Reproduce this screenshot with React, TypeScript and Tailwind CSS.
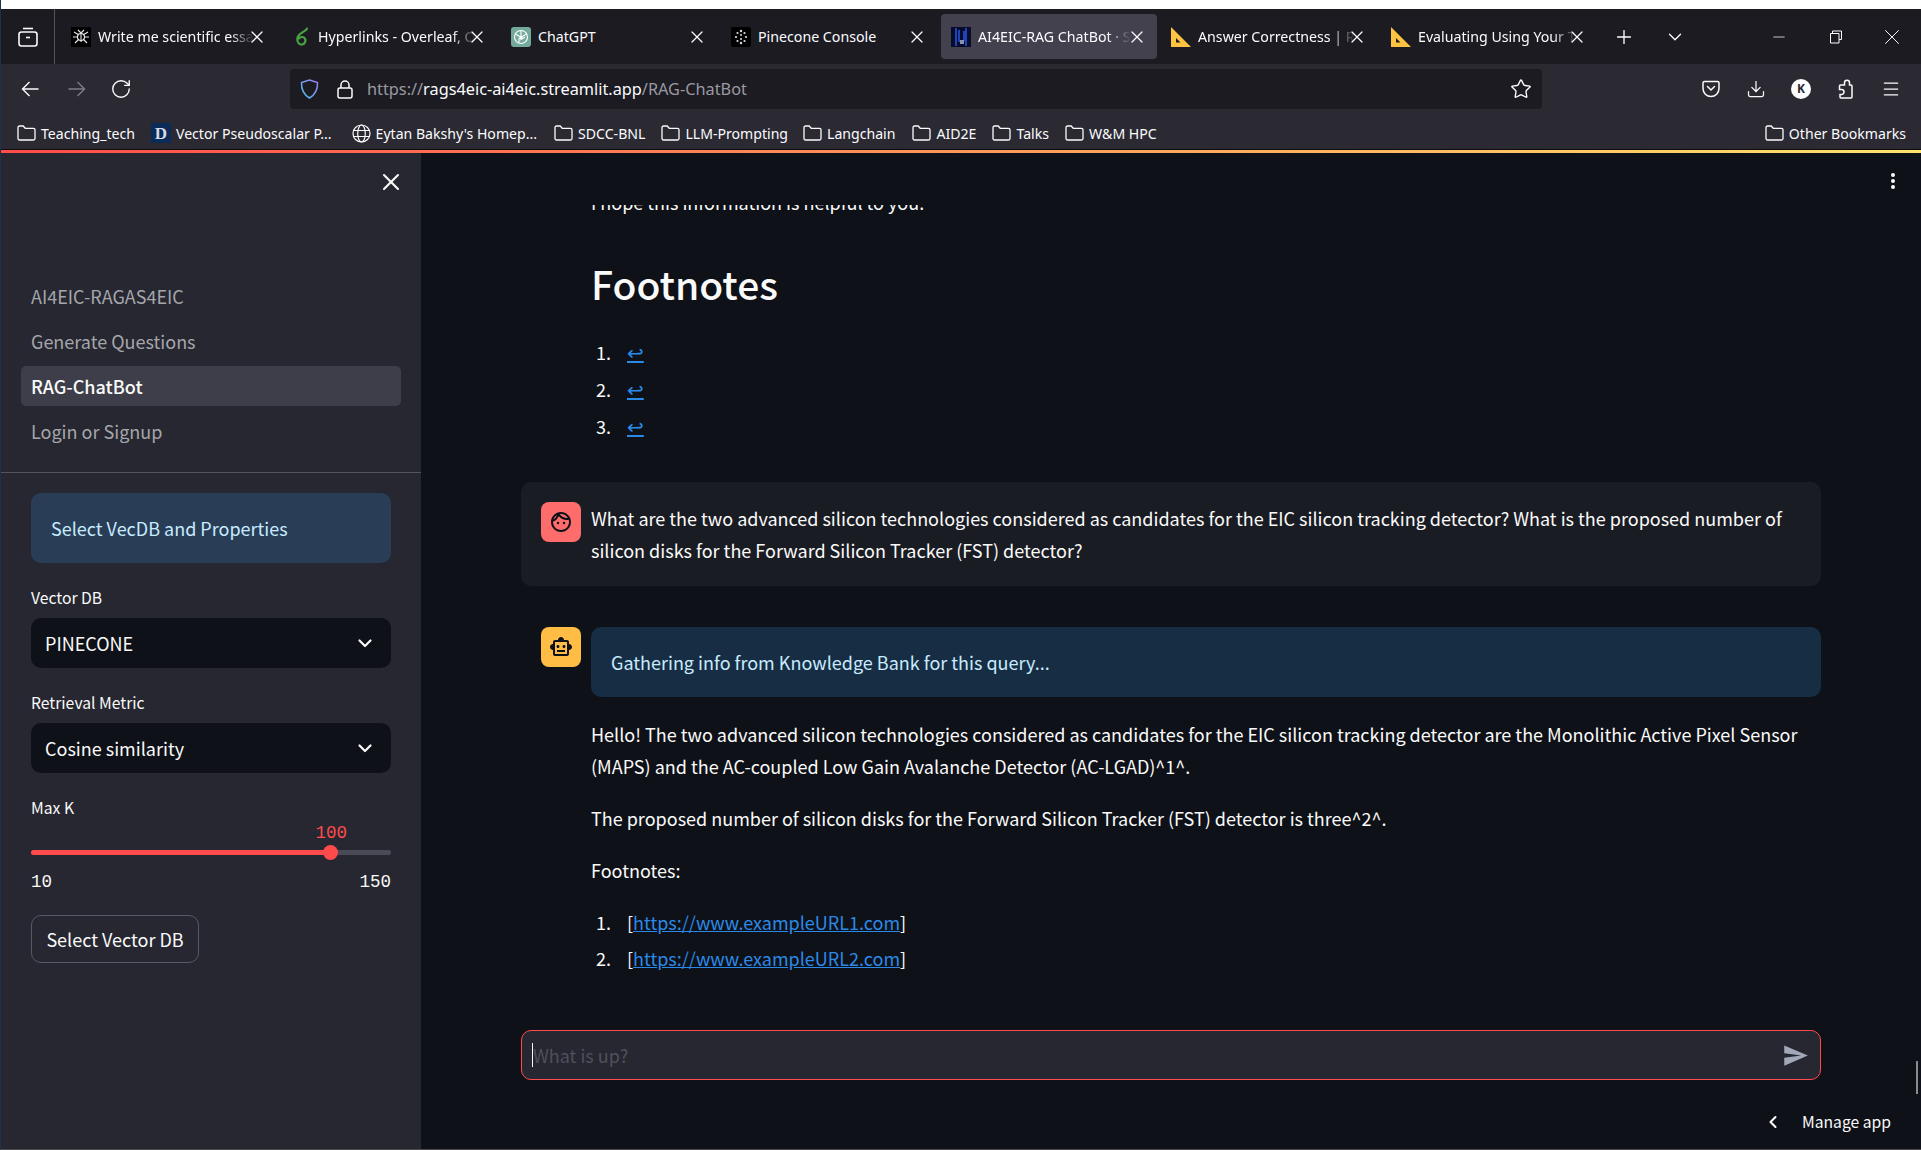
import { ChevronDown, ChevronLeft, Download, Menu, Minus, Plus, RotateCw, Star, X } from 'lucide-react'
import { MdOutlineFace, MdOutlineSmartToy, MdSend } from 'react-icons/md'
import type { ReactNode } from 'react'

const ui = 'font-["Noto_Sans_CJK_SC","Noto_Sans",sans-serif]'
const chrome = 'font-["Noto_Sans","Open_Sans",sans-serif]'

function FolderIcon() {
  return (
    <svg width="19" height="16" viewBox="0 0 19 16" fill="none" stroke="#fbfbfe" strokeWidth="1.300" className="shrink-0">
      <path d="M1 2.500A1.500 1.500 0 0 1 2.500 1h3.700l2 2.300h8.300A1.500 1.500 0 0 1 18 4.800v8.700a1.500 1.500 0 0 1-1.500 1.500h-14A1.500 1.500 0 0 1 1 13.500z" />
    </svg>
  )
}

function TabFavicon({ kind }: { kind: string }) {
  if (kind === 'spider') {
    return (
      <svg width="20" height="20" viewBox="0 0 20 20" className="shrink-0">
        <rect width="20" height="20" fill="#000" />
        <g stroke="#e8e8e8" strokeWidth="1.100" fill="none">
          <circle cx="10" cy="10" r="3.500" />
          <path d="M7 3l3 3 3-3M3 5l5 3M17 5l-5 3M2 10h5M18 10h-5M4 16l4-4M16 16l-4-4M10 6v9" />
        </g>
      </svg>
    )
  }
  if (kind === 'leaf') {
    return (
      <svg width="20" height="20" viewBox="0 0 20 20" fill="none" className="shrink-0">
        <path d="M16 1.500c-.5 3-7.500 3.500-9.500 9-1.200 4 1.500 7.500 4.500 7 3-.5 4.500-4 2.500-6.500-1.500-1.500-4-1-5.500.5" stroke="#47a141" strokeWidth="2.200" strokeLinecap="round" />
      </svg>
    )
  }
  if (kind === 'gpt') {
    return (
      <svg width="20" height="20" viewBox="0 0 20 20" fill="none" className="shrink-0">
        <rect width="20" height="20" rx="3" fill="#74aa9c" />
        <g stroke="#fff" strokeWidth="1.100">
          <circle cx="10" cy="10" r="6.500" />
          <path d="M10 3.500v9l4-2.500M4.500 7l7.500 4.500M15.500 7L8 11.500v4" />
        </g>
      </svg>
    )
  }
  if (kind === 'pine') {
    return (
      <svg width="20" height="20" viewBox="0 0 20 20" className="shrink-0">
        <rect width="20" height="20" rx="2" fill="#000" />
        <g fill="#ddd">
          <circle cx="10" cy="4" r="1.200" /><circle cx="6.500" cy="6" r="1.100" /><circle cx="13.500" cy="6" r="1.100" />
          <circle cx="10" cy="8" r="1" /><circle cx="5" cy="10" r="1.100" /><circle cx="15" cy="10" r="1.100" />
          <circle cx="10" cy="12" r="1" /><circle cx="6.500" cy="14" r="1.100" /><circle cx="13.500" cy="14" r="1.100" /><circle cx="10" cy="16" r="1.200" />
        </g>
      </svg>
    )
  }
  if (kind === 'aieic') {
    return (
      <svg width="20" height="20" viewBox="0 0 20 20" className="shrink-0">
        <rect width="20" height="20" fill="#060c2a" />
        <path d="M5 1v18M8 3v12M15 1v18M13 4v10" stroke="#1f43b8" strokeWidth="2" />
        <rect x="9" y="13" width="4" height="4" fill="#8a93b0" />
      </svg>
    )
  }
  return (
    <svg width="20" height="20" viewBox="0 0 20 20" className="shrink-0">
      <path d="M0 0l20 20H0z" fill="#ffc342" />
      <path d="M5 11l4.500 4.500H5z" fill="#1c1b22" />
    </svg>
  )
}

function Tab({ icon, title, active, fade = true }: { icon: string; title: string; active?: boolean; fade?: boolean }) {
  return (
    <div className={`flex h-[45px] w-[216px] shrink-0 items-center rounded-[4px] pl-[10px] pr-[10px] ${active ? 'bg-[#42414d]' : ''}`}>
      <TabFavicon kind={icon} />
      <span className="ml-[7px] min-w-0 flex-1">
        <span className={`block w-fit whitespace-nowrap text-[14.200px] text-[#fbfbfe] ${fade ? '[mask-image:linear-gradient(to_left,transparent,black_24px)]' : ''}`}>
          {title}
        </span>
      </span>
      <X size={20} strokeWidth={1.500} className="shrink-0 text-[#fbfbfe]" />
    </div>
  )
}

function Bookmark({ icon, label, className }: { icon?: ReactNode; label: string; className?: string }) {
  return (
    <div className={`flex items-center gap-[5px] whitespace-nowrap text-[14.100px] text-[#fbfbfe] ${className ?? ''}`}>
      {icon ?? <FolderIcon />}
      <span>{label}</span>
    </div>
  )
}

function BrowserChrome() {
  return (
    <div className={chrome}>
      <div className="h-[9px] bg-white" />
      <div className="flex h-[55px] items-center bg-[#1c1b22]">
        <div className="flex h-full w-[54px] shrink-0 items-center justify-center border-r border-[#55545c]">
          <svg width="20" height="20" viewBox="0 0 20 20" fill="none" stroke="#fbfbfe" strokeWidth="1.600">
            <rect x="1" y="5" width="18" height="14" rx="2.500" />
            <path d="M5 1.500h10" />
            <path d="M8 10.500h4" />
          </svg>
        </div>
        <div className="ml-[6px] flex gap-[4px]">
          <Tab icon="spider" title="Write me scientific essa" />
          <Tab icon="leaf" title="Hyperlinks - Overleaf, O" />
          <Tab icon="gpt" title="ChatGPT" fade={false} />
          <Tab icon="pine" title="Pinecone Console" fade={false} />
          <Tab icon="aieic" title="AI4EIC-RAG ChatBot · S" active />
          <Tab icon="tri" title="Answer Correctness | R" />
          <Tab icon="tri" title="Evaluating Using Your T" />
        </div>
        <Plus size={22} strokeWidth={1.500} className="ml-[16px] shrink-0 text-[#fbfbfe]" />
        <ChevronDown size={22} strokeWidth={1.500} className="ml-[29px] shrink-0 text-[#fbfbfe]" />
        <div className="ml-auto flex items-center pr-[16px] text-[#fbfbfe]">
          <Minus size={18} strokeWidth={1} />
          <svg width="14" height="14" viewBox="0 0 14 14" fill="none" stroke="currentColor" className="ml-[41px]"><path d="M3.500 3.500V1h9v8.500H10M1.500 3.500h8.500v9.500H1.500z" /></svg>
          <X size={26} strokeWidth={0.900} className="ml-[36px]" />
        </div>
      </div>
      <div className="flex h-[54px] items-center bg-[#2b2a33] pb-[4px] pl-[20px] pr-[20px]">
        <svg width="18" height="18" viewBox="0 0 18 18" fill="none" stroke="#fbfbfe" strokeWidth="1.400">
          <path d="M17.500 9H1.500M8.500 2l-7 7 7 7" />
        </svg>
        <svg width="18" height="18" viewBox="0 0 18 18" fill="none" stroke="#7e7d85" strokeWidth="1.400" className="ml-[29px]">
          <path d="M.500 9h16M9.500 2l7 7-7 7" />
        </svg>
        <RotateCw size={22} strokeWidth={1.500} className="ml-[24px] text-[#fbfbfe]" />
        <div className="ml-[158px] flex h-[40px] w-[1252px] items-center rounded-[4px] bg-[#1c1b22] pl-[10px] pr-[10px]">
          <svg width="19" height="20" viewBox="0 0 19 20" fill="none" strokeWidth="1.500">
            <defs>
              <linearGradient id="shieldStroke" x1="0" y1="1" x2="1" y2="0">
                <stop offset="0" stopColor="#4fc3f7" />
                <stop offset="1" stopColor="#9a7bea" />
              </linearGradient>
            </defs>
            <path d="M9.500 1l8 2.500c.3 6.500-2 12-8 15.500-6-3.500-8.300-9-8-15.500z" stroke="url(#shieldStroke)" />
          </svg>
          <svg width="16" height="19" viewBox="0 0 16 19" fill="none" stroke="#fbfbfe" strokeWidth="1.500" className="ml-[18px]">
            <rect x="1" y="8" width="14" height="10" rx="2" />
            <path d="M4 8V5a4 4 0 0 1 8 0v3" />
          </svg>
          <div className="ml-[14px] text-[16.300px] text-[#9a99a1]">
            https://<span className="text-[#fbfbfe]">rags4eic-ai4eic.streamlit.app</span>/RAG-ChatBot
          </div>
          <Star size={22} strokeWidth={1.500} className="ml-auto text-[#fbfbfe]" />
        </div>
        <div className="ml-auto flex items-center gap-[25px] text-[#fbfbfe]">
          <svg width="20" height="20" viewBox="0 0 20 20" fill="none" stroke="currentColor" strokeWidth="1.500">
            <path d="M3.500 2.500h13A1.500 1.500 0 0 1 18 4v5.500a8 8 0 0 1-16 0V4a1.500 1.500 0 0 1 1.500-1.500z" />
            <path d="M6.500 7.500L10 11l3.500-3.500" strokeLinecap="round" />
          </svg>
          <Download size={20} strokeWidth={1.500} />
          <div className="flex h-[20px] w-[20px] items-center justify-center rounded-full bg-white text-[12px] font-bold text-[#2b2a33]">K</div>
          <svg width="20" height="20" viewBox="0 0 20 20" fill="none" stroke="currentColor" strokeWidth="1.500">
            <path d="M7 6h1.500V3.800a2.500 2.500 0 0 1 5 0V6h1.500a1 1 0 0 1 1 1v11a1 1 0 0 1-1 1H5a1 1 0 0 1-1-1v-2.500h1.500a2.500 2.500 0 0 0 0-5H3.500V7a1 1 0 0 1 1-1z" />
          </svg>
          <Menu size={20} strokeWidth={1.500} />
        </div>
      </div>
      <div className="flex h-[31px] items-center bg-[#2b2a33] pl-[16px] pr-[15px]">
        <Bookmark label="Teaching_tech" />
        <Bookmark
          className="ml-[16px]"
          label="Vector Pseudoscalar P..."
          icon={<span className="flex h-[20px] w-[20px] items-center justify-center bg-[#0b2b58] font-['Liberation_Serif',serif] text-[17px] font-bold text-[#d7dbe6]">D</span>}
        />
        <Bookmark
          className="ml-[20px]"
          label="Eytan Bakshy's Homep..."
          icon={
            <svg width="19" height="19" viewBox="0 0 19 19" fill="none" stroke="#fbfbfe" strokeWidth="1.200">
              <circle cx="9.500" cy="9.500" r="8.500" />
              <ellipse cx="9.500" cy="9.500" rx="3.800" ry="8.500" />
              <path d="M1.500 6.500h16M1.500 12.500h16" />
            </svg>
          }
        />
        <Bookmark className="ml-[17px]" label="SDCC-BNL" />
        <Bookmark className="ml-[16px]" label="LLM-Prompting" />
        <Bookmark className="ml-[15px]" label="Langchain" />
        <Bookmark className="ml-[17px]" label="AID2E" />
        <Bookmark className="ml-[16px]" label="Talks" />
        <Bookmark className="ml-[16px]" label="W&M HPC" />
        <Bookmark className="ml-auto" label="Other Bookmarks" />
      </div>
      <div className="h-px bg-[#0c0c0d]" />
      <div className="h-[3px] bg-[linear-gradient(to_right,#ff4b4b,#ffe36b)]" />
    </div>
  )
}

function SelectBox({ label, value }: { label: string; value: string }) {
  return (
    <div>
      <div className="text-[15.700px] leading-[20px] text-[#fafafa]">{label}</div>
      <div className="mt-[10px] flex h-[50px] items-center justify-between rounded-[10px] bg-[#0e1117] pl-[14px] pr-[18px] text-[18px] text-[#fafafa]">
        <span>{value}</span>
        <svg width="16" height="16" viewBox="0 0 16 16" fill="none" stroke="#fafafa" strokeWidth="2.200" strokeLinecap="round" strokeLinejoin="round">
          <path d="M2.500 5.500L8 11l5.500-5.500" />
        </svg>
      </div>
    </div>
  )
}

function Sidebar() {
  return (
    <aside className="flex w-[420px] shrink-0 flex-col bg-[#262730]">
      <div className="flex h-[43px] items-end justify-end pr-[16px]">
        <X size={28} strokeWidth={1.800} className="text-[#fafafa]" />
      </div>
      <nav className="mt-[80px] flex flex-col gap-[5px] px-[20px] text-[18px] text-[#a5a6ab]">
        <div className="flex h-[40px] items-center px-[10px]">AI4EIC-RAGAS4EIC</div>
        <div className="flex h-[40px] items-center px-[10px]">Generate Questions</div>
        <div className="flex h-[40px] items-center rounded-[5px] bg-[#3d3e49] px-[10px] font-medium text-[#fafafa]">RAG-ChatBot</div>
        <div className="flex h-[40px] items-center px-[10px]">Login or Signup</div>
      </nav>
      <div className="mt-[21px] h-px bg-[#53545d]" />
      <div className="flex flex-col px-[30px] pt-[20px]">
        <div className="flex h-[70px] items-center rounded-[10px] bg-[#293e56] px-[20px] text-[18px] text-[#c7ebff]">Select VecDB and Properties</div>
        <div className="mt-[25px] flex flex-col gap-[25px]">
          <SelectBox label="Vector DB" value="PINECONE" />
          <SelectBox label="Retrieval Metric" value="Cosine similarity" />
        </div>
        <div className="mt-[25px] text-[15.700px] leading-[20px] text-[#fafafa]">Max K</div>
        <div className="mt-[5px] flex justify-end pr-[44px] font-['Liberation_Mono',monospace] text-[17.500px] leading-[20px] text-[#ff4b4b]">100</div>
        <div className="relative mt-[7px] h-[5px] rounded-full bg-[#4a4b57]">
          <div className="h-full w-[300px] rounded-full bg-[#ff4b4b]" />
          <div className="absolute left-[292px] top-[-5px] h-[15px] w-[15px] rounded-full bg-[#ff4b4b]" />
        </div>
        <div className="mt-[17px] flex justify-between font-['Liberation_Mono',monospace] text-[17.500px] leading-[20px] text-[#fafafa]">
          <span>10</span>
          <span>150</span>
        </div>
        <button className="mt-[23px] h-[48px] w-[168px] rounded-[10px] border border-[#585964] text-[18px] text-[#fafafa]">Select Vector DB</button>
      </div>
    </aside>
  )
}

function Avatar({ bg, children }: { bg: string; children: ReactNode }) {
  return <div className={`flex h-[40px] w-[40px] shrink-0 items-center justify-center rounded-[8px] text-[#0e1117] ${bg}`}>{children}</div>
}

function BackRefs() {
  return (
    <ol className="mt-[24px] list-decimal pl-[24px] leading-[32px]">
      {[1, 2, 3].map((n) => (
        <li key={n} className="mb-[4px] pl-[12px]">
          <a className="font-['DejaVu_Sans',sans-serif] text-[20px] text-[#2b8ae8] underline">↩</a>
        </li>
      ))}
    </ol>
  )
}

function ChatMain() {
  return (
    <main className="relative flex min-w-0 flex-1 flex-col bg-[#0e1117] text-[18px] leading-[32px] text-[#fafafa]">
      <div className="h-[52px] shrink-0" />
      <div className="min-h-0 flex-1 overflow-hidden px-[100px]">
        <div className="-mt-[19px] pl-[70px]">
          <p>I hope this information is helpful to you.</p>
          <h1 className="mt-[37px] text-[39px] font-medium leading-[57px]">Footnotes</h1>
          <BackRefs />
        </div>
        <div className="mt-[39px] flex gap-[10px] rounded-[10px] bg-[#1a1c24] p-[20px]">
          <Avatar bg="bg-[#ff6c6c]"><MdOutlineFace size={24} /></Avatar>
          <p className="min-h-[63px]">
            What are the two advanced silicon technologies considered as candidates for the EIC silicon tracking detector? What is the proposed number of silicon disks for the Forward Silicon Tracker (FST) detector?
          </p>
        </div>
        <div className="mt-[41px] flex gap-[10px] pl-[20px]">
          <Avatar bg="bg-[#ffbd45]"><MdOutlineSmartToy size={24} /></Avatar>
          <div className="min-w-0 flex-1">
            <div className="flex h-[70px] items-center rounded-[10px] bg-[#172d43] px-[20px] text-[#c7ebff]">
              Gathering info from Knowledge Bank for this query...
            </div>
            <p className="mt-[21px]">
              Hello! The two advanced silicon technologies considered as candidates for the EIC silicon tracking detector are the Monolithic Active Pixel Sensor (MAPS) and the AC-coupled Low Gain Avalanche Detector (AC-LGAD)^1^.
            </p>
            <p className="mt-[20px]">The proposed number of silicon disks for the Forward Silicon Tracker (FST) detector is three^2^.</p>
            <p className="mt-[20px]">Footnotes:</p>
            <ol className="mt-[20px] list-decimal pl-[24px]">
              <li className="mb-[4px] pl-[12px]">[<a className="text-[#2b8ae8] underline">https://www.exampleURL1.com</a>]</li>
              <li className="pl-[12px]">[<a className="text-[#2b8ae8] underline">https://www.exampleURL2.com</a>]</li>
            </ol>
          </div>
        </div>
      </div>
      <div className="h-[119px] shrink-0 px-[100px]">
        <div className="flex h-[50px] items-center justify-between rounded-[10px] border border-[#ff4b4b] bg-[#262730] pl-[10px] pr-[11px]">
          <div className="flex items-center">
            <span className="h-[24px] w-px bg-[#fafafa]" />
            <span className="text-[#4f505b]">What is up?</span>
          </div>
          <MdSend size={27} className="text-[#a3a8b8]" />
        </div>
      </div>
      <div className="absolute right-[25px] top-[18px]">
        <svg width="6" height="20" viewBox="0 0 6 20" fill="#fafafa">
          <circle cx="3" cy="4" r="2" /><circle cx="3" cy="10" r="2" /><circle cx="3" cy="16" r="2" />
        </svg>
      </div>
      <div className="absolute bottom-[15px] right-[30px] flex items-center gap-[19px] text-[15.700px] leading-[24px]">
        <ChevronLeft size={20} strokeWidth={2.500} />
        <span>Manage app</span>
      </div>
      <div className="absolute bottom-[55px] right-[3px] h-[33px] w-[2px] bg-[#8a8b91]" />
    </main>
  )
}

export default function App() {
  return (
    <div className={`flex h-[1150px] w-[1921px] flex-col overflow-hidden border-b border-l border-b-[#4a4a4f] border-l-[#1f3048] ${ui}`}>
      <BrowserChrome />
      <div className="flex min-h-0 flex-1">
        <Sidebar />
        <ChatMain />
      </div>
    </div>
  )
}
